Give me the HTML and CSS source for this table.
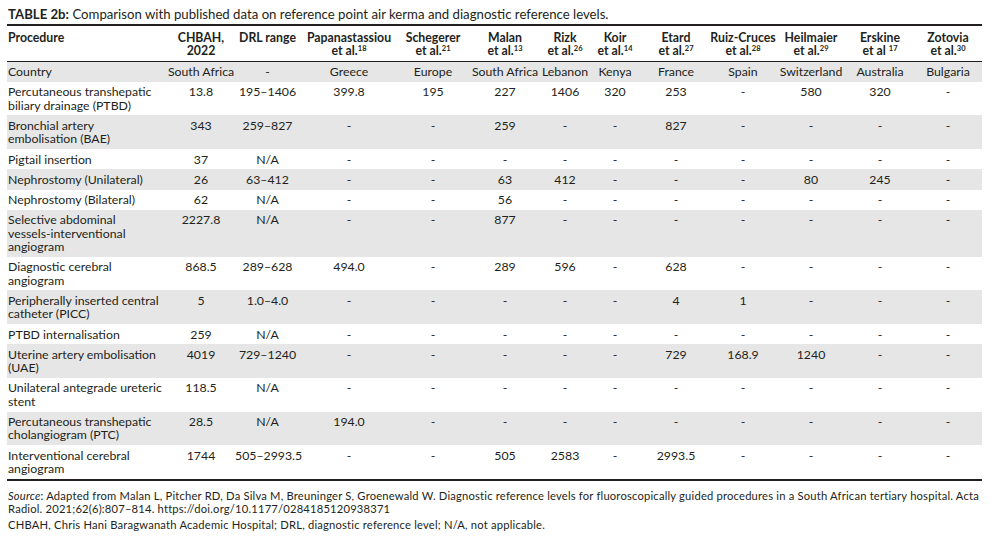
FILE: index.html
```html
<!DOCTYPE html>
<html>
<head>
<meta charset="utf-8">
<link rel="stylesheet" href="styles.css">
</head>
<body>
<div class="page">
  <div class="title"><b>TABLE 2b:</b> Comparison with published data on reference point air kerma and diagnostic reference levels.</div>
  <table class="tbl">
    <colgroup>
      <col class="c-proc"><col class="c68"><col class="c65"><col class="c98"><col class="c70"><col class="c74"><col class="c46"><col class="c54"><col class="c68"><col class="c66"><col class="c70"><col class="c68"><col class="c68">
    </colgroup>
    <thead>
      <tr>
        <th class="left">Procedure</th>
        <th>CHBAH,<br>2022</th>
        <th>DRL range</th>
        <th>Papanastassiou<br>et al.<sup>18</sup></th>
        <th>Schegerer<br>et al.<sup>21</sup></th>
        <th>Malan<br>et al.<sup>13</sup></th>
        <th>Rizk<br>et al.<sup>26</sup></th>
        <th>Koir<br>et al.<sup>14</sup></th>
        <th>Etard<br>et al.<sup>27</sup></th>
        <th>Ruiz-Cruces<br>et al.<sup>28</sup></th>
        <th>Heilmaier<br>et al.<sup>29</sup></th>
        <th>Erskine<br>et al <sup>17</sup></th>
        <th>Zotovia<br>et al.<sup>30</sup></th>
      </tr>
    </thead>
    <tbody>
      <tr class="g"><td class="left">Country</td><td>South Africa</td><td>-</td><td>Greece</td><td>Europe</td><td>South Africa</td><td>Lebanon</td><td>Kenya</td><td>France</td><td>Spain</td><td>Switzerland</td><td>Australia</td><td>Bulgaria</td></tr>
      <tr><td class="left">Percutaneous transhepatic<br>biliary drainage (PTBD)</td><td>13.8</td><td>195–1406</td><td>399.8</td><td>195</td><td>227</td><td>1406</td><td>320</td><td>253</td><td>-</td><td>580</td><td>320</td><td>-</td></tr>
      <tr class="g"><td class="left">Bronchial artery<br>embolisation (BAE)</td><td>343</td><td>259–827</td><td>-</td><td>-</td><td>259</td><td>-</td><td>-</td><td>827</td><td>-</td><td>-</td><td>-</td><td>-</td></tr>
      <tr><td class="left">Pigtail insertion</td><td>37</td><td>N/A</td><td>-</td><td>-</td><td>-</td><td>-</td><td>-</td><td>-</td><td>-</td><td>-</td><td>-</td><td>-</td></tr>
      <tr class="g"><td class="left">Nephrostomy (Unilateral)</td><td>26</td><td>63–412</td><td>-</td><td>-</td><td>63</td><td>412</td><td>-</td><td>-</td><td>-</td><td>80</td><td>245</td><td>-</td></tr>
      <tr><td class="left">Nephrostomy (Bilateral)</td><td>62</td><td>N/A</td><td>-</td><td>-</td><td>56</td><td>-</td><td>-</td><td>-</td><td>-</td><td>-</td><td>-</td><td>-</td></tr>
      <tr class="g"><td class="left">Selective abdominal<br>vessels-interventional<br>angiogram</td><td>2227.8</td><td>N/A</td><td>-</td><td>-</td><td>877</td><td>-</td><td>-</td><td>-</td><td>-</td><td>-</td><td>-</td><td>-</td></tr>
      <tr><td class="left">Diagnostic cerebral<br>angiogram</td><td>868.5</td><td>289–628</td><td>494.0</td><td>-</td><td>289</td><td>596</td><td>-</td><td>628</td><td>-</td><td>-</td><td>-</td><td>-</td></tr>
      <tr class="g"><td class="left">Peripherally inserted central<br>catheter (PICC)</td><td>5</td><td>1.0–4.0</td><td>-</td><td>-</td><td>-</td><td>-</td><td>-</td><td>4</td><td>1</td><td>-</td><td>-</td><td>-</td></tr>
      <tr><td class="left">PTBD internalisation</td><td>259</td><td>N/A</td><td>-</td><td>-</td><td>-</td><td>-</td><td>-</td><td>-</td><td>-</td><td>-</td><td>-</td><td>-</td></tr>
      <tr class="g"><td class="left">Uterine artery embolisation<br>(UAE)</td><td>4019</td><td>729–1240</td><td>-</td><td>-</td><td>-</td><td>-</td><td>-</td><td>729</td><td>168.9</td><td>1240</td><td>-</td><td>-</td></tr>
      <tr><td class="left">Unilateral antegrade ureteric<br>stent</td><td>118.5</td><td>N/A</td><td>-</td><td>-</td><td>-</td><td>-</td><td>-</td><td>-</td><td>-</td><td>-</td><td>-</td><td>-</td></tr>
      <tr class="g"><td class="left">Percutaneous transhepatic<br>cholangiogram (PTC)</td><td>28.5</td><td>N/A</td><td>194.0</td><td>-</td><td>-</td><td>-</td><td>-</td><td>-</td><td>-</td><td>-</td><td>-</td><td>-</td></tr>
      <tr><td class="left">Interventional cerebral<br>angiogram</td><td>1744</td><td>505–2993.5</td><td>-</td><td>-</td><td>505</td><td>2583</td><td>-</td><td>2993.5</td><td>-</td><td>-</td><td>-</td><td>-</td></tr>
    </tbody>
  </table>
  <div class="notes">
    <p><i>Source</i>: Adapted from Malan L, Pitcher RD, Da Silva M, Breuninger S, Groenewald W. Diagnostic reference levels for fluoroscopically guided procedures in a South African tertiary hospital. Acta<br>Radiol. 2021;62(6):807–814. https://doi.org/10.1177/0284185120938371</p>
    <p>CHBAH, Chris Hani Baragwanath Academic Hospital; DRL, diagnostic reference level; N/A, not applicable.</p>
  </div>
</div>
</body>
</html>
```

FILE: styles.css
```css
html, body {
  margin: 0;
  padding: 0;
  background: #ffffff;
}
body {
  font-family: Lato, "Open Sans", sans-serif;
  color: #231f20;
}
.page {
  width: 975px;
  margin-left: 7px;
  padding-top: 7px;
}
.title {
  font-size: 13.2px;
  line-height: 15px;
  padding-left: 1px;
  padding-bottom: 1.5px;
  border-bottom: 2px solid #231f20;
}
.title b {
  font-weight: 700;
}
.tbl {
  width: 975px;
  border-collapse: collapse;
  table-layout: fixed;
  font-size: 12.3px;
  line-height: 13.3px;
}
.c-proc { width: 160px; }
.c70 { width: 70px; }
.c65 { width: 65px; }
.c98 { width: 98px; }
.c74 { width: 74px; }
.c46 { width: 46px; }
.c54 { width: 54px; }
.c68 { width: 68px; }
.c66 { width: 66px; }
.tbl th {
  font-weight: 700;
  text-align: center;
  vertical-align: top;
  padding: 5.5px 0 3px 0;
  border-bottom: 1px solid #231f20;
  white-space: nowrap;
}
.tbl td {
  text-align: center;
  vertical-align: top;
  padding: 3.5px 0;
  white-space: nowrap;
}
.tbl .left {
  text-align: left;
  padding-left: 1px;
}
.tbl sup {
  font-size: 7.5px;
  line-height: 0;
  vertical-align: 4px;
}
.tbl tr.g td {
  background: #e6e6e6;
}
.tbl tbody tr:last-child td {
  border-bottom: 2px solid #231f20;
}
.notes {
  padding-left: 1px;
  font-size: 11.2px;
  line-height: 13px;
  letter-spacing: 0.2px;
  padding-top: 8px;
}
.notes p {
  margin: 0 0 3px 0;
  white-space: nowrap;
}
```
